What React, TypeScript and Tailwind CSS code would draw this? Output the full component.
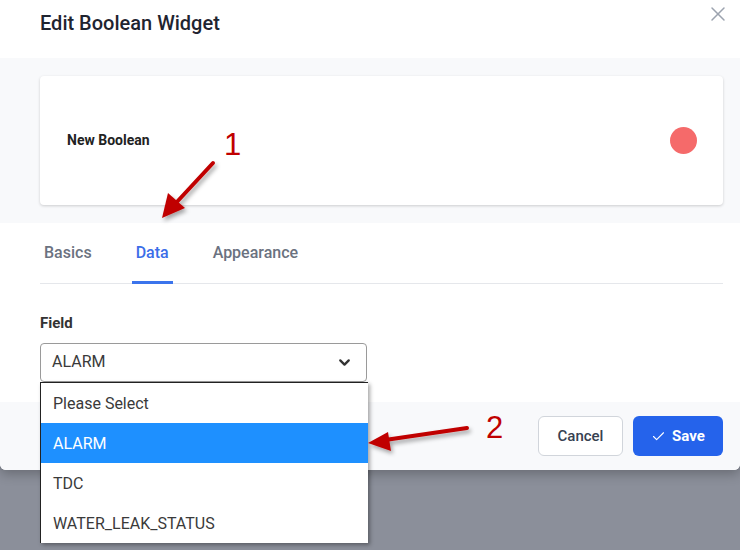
import { Check, ChevronDown, X } from "lucide-react";

const font = { fontFamily: "Roboto, 'Liberation Sans', sans-serif" };

const options = ["Please Select", "ALARM", "TDC", "WATER_LEAK_STATUS"];

export default function App() {
  return (
    <div className="relative h-[550px] w-[740px] overflow-hidden bg-[#8b8f9a]" style={font}>
      {/* modal */}
      <div className="flex h-[470px] w-[740px] flex-col overflow-hidden rounded-b-md bg-white shadow-[0_4px_12px_rgba(0,0,0,0.25)]">
        <div className="flex h-[58px] items-start justify-between pl-10 pr-[10px]">
          <h2 className="pt-[8px] text-[20px] font-medium text-[#1f2430]">Edit Boolean Widget</h2>
          <button className="mt-[2px] text-[#9ca3af]">
            <X size={24} strokeWidth={1.5} />
          </button>
        </div>

        <div className="bg-[#f8f9fb] pb-[18px] pl-10 pr-[17px] pt-[18px]">
          <div className="flex h-[129px] items-center justify-between rounded-sm bg-white pl-[27px] pr-[26px] shadow-[0_1px_3px_rgba(0,0,0,0.18)]">
            <span className="text-[14px] font-bold text-[#222]">New Boolean</span>
            <span className="h-[27px] w-[27px] rounded-full bg-[#f56a6a]" />
          </div>
        </div>

        <div className="flex-1 pl-10 pr-[17px]">
          <div className="flex gap-9 border-b border-[#e5e7eb] pt-[19px]">
            <Tab label="Basics" />
            <Tab label="Data" active />
            <Tab label="Appearance" />
          </div>

          <div className="mt-[28px] text-[15px] font-bold text-[#333]">Field</div>
          <div className="mt-[8px] flex h-[39px] w-[327px] items-center justify-between rounded-[4px] border border-[#9a9a9a] pl-[11px] pr-[13px]">
            <span className="text-[16px] text-[#3a3a3a]">ALARM</span>
            <ChevronDown size={17} strokeWidth={3.25} className="text-[#333]" />
          </div>
        </div>

        <div className="flex h-[68px] items-start justify-end gap-[10px] bg-[#f8f9fb] pr-[17px] pt-[14px]">
          <button className="h-10 w-[85px] rounded-md border border-[#d1d5db] bg-white text-[15px] font-medium text-[#374151]">
            Cancel
          </button>
          <button className="flex h-10 w-[90px] items-center justify-center gap-[6px] rounded-md bg-[#2563eb] text-[15px] font-bold text-white">
            <Check size={15} strokeWidth={1.75} />
            Save
          </button>
        </div>
      </div>

      {/* native select dropdown */}
      <div className="absolute left-[40px] top-[382px] w-[328px] border-l border-t border-[#222] bg-white shadow-[2px_2px_4px_rgba(0,0,0,0.35)]">
        {options.map((o) => (
          <div
            key={o}
            className={[
              "flex h-10 items-center pl-[12px] pt-[1px] text-[16px]",
              o === "ALARM" ? "bg-[#1e90ff] text-white" : "text-[#3a3a3a]",
            ].join(" ")}
          >
            {o}
          </div>
        ))}
      </div>

      {/* annotations */}
      <svg className="pointer-events-none absolute left-0 top-0" width="740" height="550">
        <defs>
          <filter id="sh" x="-20%" y="-20%" width="140%" height="140%">
            <feDropShadow dx="2" dy="3" stdDeviation="2" floodColor="#000" floodOpacity="0.35" />
          </filter>
        </defs>
        <g filter="url(#sh)" fill="#c00000" stroke="#c00000">
          <line x1="213" y1="163" x2="175" y2="204" strokeWidth="4" strokeLinecap="round" />
          <polygon points="162,218 168,193 185,208" stroke="none" />
          <line x1="467" y1="428" x2="385" y2="440" strokeWidth="4" strokeLinecap="round" />
          <polygon points="368,443 388,432 391,451" stroke="none" />
        </g>
        <text x="224" y="155" fontSize="31" fill="#c00000" fontFamily="'Liberation Sans', sans-serif">1</text>
        <text x="486" y="438" fontSize="31" fill="#c00000" fontFamily="'Liberation Sans', sans-serif">2</text>
      </svg>
    </div>
  );
}

function Tab({ label, active }: { label: string; active?: boolean }) {
  return (
    <div
      className={[
        "-mb-px border-b-[3px] px-[4px] pb-[17px] text-[16px] font-medium leading-[22px]",
        active ? "border-[#3b74ec] text-[#3b6ee8]" : "border-transparent text-[#6b7280]",
      ].join(" ")}
    >
      {label}
    </div>
  );
}
